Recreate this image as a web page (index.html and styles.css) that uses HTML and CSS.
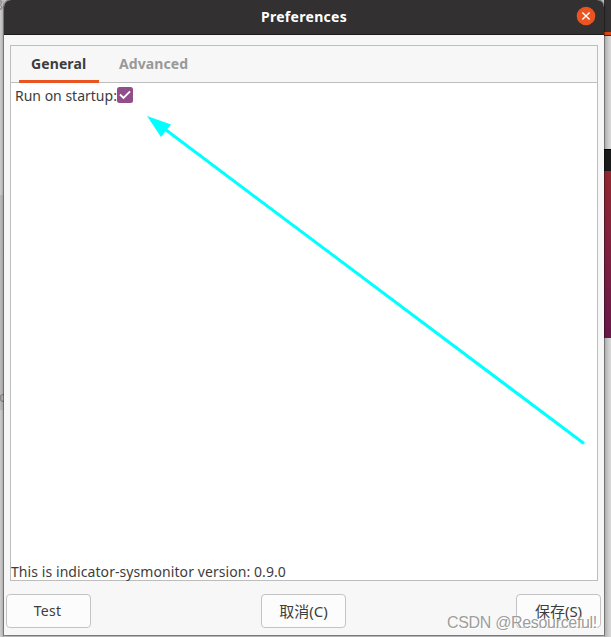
FILE: index.html
```html
<!DOCTYPE html>
<html lang="en">
<head>
<meta charset="utf-8">
<title>Preferences</title>
<link rel="stylesheet" href="styles.css">
</head>
<body>
<div class="desktop">
  <div class="behind-left">
    <span class="peek peek-top">8</span>
    <div class="behind-panel"><span class="peek peek-low">d</span></div>
  </div>
  <div class="behind-right">
    <div class="strip-title"></div>
    <div class="strip-accent"></div>
    <div class="strip-gap"></div>
    <div class="strip-bar"></div>
    <div class="strip-wallpaper"></div>
  </div>
  <main class="window">
    <header class="titlebar">
      <h1 class="title">Preferences</h1>
      <button class="close" aria-label="Close">
        <svg width="20" height="20" viewBox="0 0 20 20"><circle cx="10" cy="10" r="9.3" fill="#e95420"/><path d="M6.4 6.4l7.2 7.2M13.6 6.4l-7.2 7.2" stroke="#fff" stroke-width="1.4" fill="none"/></svg>
      </button>
    </header>
    <section class="notebook">
      <nav class="tabs">
        <div class="tab active">General</div>
        <div class="tab">Advanced</div>
      </nav>
      <div class="page">
        <label class="option">Run on startup:
          <svg class="check" width="16" height="16" viewBox="0 0 16 16"><rect width="16" height="16" rx="2.5" fill="#924d8b"/><path d="M3 7.5l3.5 3.5 6.500-6.600" stroke="#fff" stroke-width="1.9" fill="none"/></svg>
        </label>
        <p class="version">This is indicator-sysmonitor version: 0.9.0</p>
      </div>
    </section>
    <footer class="actions">
      <button class="btn test">Test</button>
      <button class="btn cjk">取消(C)</button>
      <button class="btn cjk">保存(S)</button>
    </footer>
  </main>
  <svg class="arrow" width="611" height="637" viewBox="0 0 611 637"><path d="M164 128.500L584 443.500" stroke="#0ff" stroke-width="3"/><path d="M147 116L171 124.500L161 137Z" fill="#0ff"/></svg>
  <div class="watermark">CSDN @Resourceful!</div>
</div>
</body>
</html>
```
FILE: styles.css
```css
* { box-sizing: border-box; }
body {
  margin: 0;
  font-family: "Noto Sans", "Noto Sans CJK SC", sans-serif;
  font-size: 14px;
  color: #3d3d3d;
}
.desktop {
  position: relative;
  width: 611px;
  height: 637px;
  overflow: hidden;
  background: #c9c9c9;
}
.behind-left {
  position: absolute;
  left: 0;
  top: 0;
  width: 4px;
  height: 637px;
  padding-top: 195px;
  overflow: hidden;
  background: linear-gradient(90deg, #d0d0d0, #b5b5b5);
}
.behind-panel { height: 215px; background: linear-gradient(90deg, #bebebe, #adadad); }
.peek { position: absolute; font-size: 14px; line-height: 16px; color: #8a8585; }
.peek-top { left: -5px; top: -3px; }
.peek-low { left: -1px; top: 389px; }
.behind-right {
  position: absolute;
  right: 0;
  top: 0;
  width: 7px;
  height: 637px;
  background: linear-gradient(90deg, #b5b5b5, #d9d9d9);
}
.strip-title { height: 32px; background: #343233; }
.strip-accent { height: 4px; background: #d94816; border-bottom: 1px solid #50200f; }
.strip-gap { height: 113px; }
.strip-bar { height: 22px; background: #1b1b1b; border-top: 1px solid #000; }
.strip-wallpaper { height: 167px; background: linear-gradient(#922830, #801f40 50%, #69184a); }
.window {
  position: relative;
  display: flex;
  flex-direction: column;
  width: 600px;
  height: 635px;
  margin-left: 4px;
  background: #f7f7f7;
  border-radius: 7px 7px 0 0;
  box-shadow: 0 0 0 1px rgba(0, 0, 0, .3), 0 1px 4px rgba(0, 0, 0, .22);
}
.titlebar {
  display: grid;
  grid-template-columns: 1fr auto 1fr;
  align-items: center;
  height: 35px;
  padding: 0 8px 2px;
  background: #323030;
  border-bottom: 1px solid #1d1b1b;
  border-radius: 7px 7px 0 0;
}
.title {
  grid-column: 2;
  margin: 0;
  padding-top: 2px;
  font-size: 14px;
  font-weight: 700;
  line-height: 20px;
  letter-spacing: .3px;
  color: #fff;
}
.close { justify-self: end; width: 20px; height: 20px; padding: 0; border: 0; background: none; }
.close svg { display: block; }
.notebook {
  display: flex;
  flex-direction: column;
  height: 536px;
  margin: 10px 6px 0;
  border: 1px solid #bdbdbd;
  background: #fff;
}
.tabs {
  display: flex;
  height: 37px;
  padding-left: 8px;
  background: #f7f7f7;
  border-bottom: 1px solid #bdbdbd;
}
.tab { height: 37px; padding: 8px 12px 0; line-height: 20px; font-weight: 700; letter-spacing: .1px; color: #999; }
.tab.active { width: 80px; border-bottom: 3px solid #e95420; color: #3d3d3d; }
.tab + .tab { padding-left: 20px; }
.page { display: flex; flex: 1; flex-direction: column; justify-content: space-between; }
.option { display: flex; align-items: center; padding: 3px 0 0 4px; line-height: 20px; }
.check { transform: translateY(-1px); }
.version { height: 18px; margin: 0; line-height: 19px; letter-spacing: .075px; }
.actions { display: flex; justify-content: space-between; padding: 13px 3px 0 2px; }
.btn {
  width: 85px;
  height: 34px;
  padding: 0;
  font: inherit;
  line-height: 20px;
  color: #3d3d3d;
  background: #fcfcfc;
  border: 1px solid #c3c3c3;
  border-radius: 4px;
}
.test { padding-right: 2px; letter-spacing: .3px; }
.cjk { font-size: 15px; }
.arrow { position: absolute; left: 0; top: 0; pointer-events: none; }
.watermark {
  position: absolute;
  left: 447px;
  top: 613px;
  font: 16px/19px "Liberation Sans", sans-serif;
  letter-spacing: -.33px;
  color: rgba(145, 145, 145, .9);
  text-shadow: 1px 1px 0 #fff;
  white-space: nowrap;
}
```
